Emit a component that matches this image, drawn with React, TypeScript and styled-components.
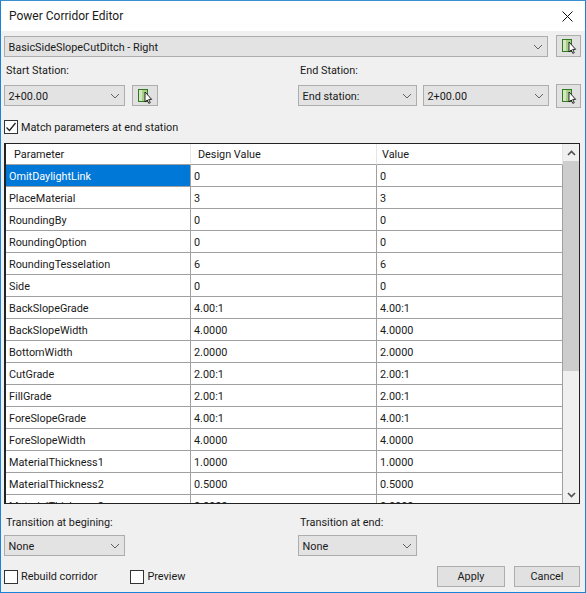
import React from "react";
import styled, { createGlobalStyle } from "styled-components";

const Global = createGlobalStyle`
  html, body { margin: 0; padding: 0; background: #f0f0f0; }
  * { box-sizing: border-box; }
`;

const Win = styled.div`
  width: 586px;
  height: 593px;
  display: flex;
  flex-direction: column;
  overflow: hidden;
  background: #f0f0f0;
  border: 1px solid #1883d7;
  border-top-color: #3a8fd0;
  font-family: Roboto, "Open Sans", sans-serif;
  font-size: 10.85px;
  color: #1a1a1a;
`;

const TitleBar = styled.div`
  height: 30px;
  flex: none;
  background: #fff;
  display: flex;
  align-items: center;
  justify-content: space-between;
  padding: 0 12px 0 8px;
  font-size: 12px;
`;

const Body = styled.div`
  flex: 1;
  display: flex;
  flex-direction: column;
  padding: 4px 4px 0 3px;
`;

const Row = styled.div<{ $mt?: number; $h?: number }>`
  display: flex;
  align-items: center;
  margin-top: ${(p) => p.$mt ?? 0}px;
  height: ${(p) => p.$h ?? 22}px;
`;

const Combo = styled.div<{ $w: number; $end?: boolean }>`
  width: ${(p) => p.$w}px;
  height: 21px;
  flex: none;
  align-self: ${(p) => (p.$end ? "flex-end" : "center")};
  border: 1px solid #adadad;
  background: #e3e3e3;
  display: flex;
  align-items: center;
  justify-content: space-between;
  padding: 1px 4px 0 3.5px;
  white-space: nowrap;
`;

const PickButton = styled.div<{ $w?: number; $h?: number }>`
  width: ${(p) => p.$w ?? 25}px;
  height: ${(p) => p.$h ?? 22}px;
  flex: none;
  border: 1px solid #adadad;
  background: #e1e1e1;
  display: flex;
  align-items: center;
  justify-content: center;
`;

const HalfLeft = styled.div`
  width: 294px;
  flex: none;
  display: flex;
  align-items: center;
`;

const Label = styled.div`
  padding: 1px 0 0 2px;
  white-space: nowrap;
`;

const Gap = styled.div<{ $w: number }>`
  width: ${(p) => p.$w}px;
  flex: none;
`;

const Check = styled.div`
  width: 14px;
  height: 14px;
  flex: none;
  border: 1px solid #333;
  background: #fff;
  display: flex;
  align-items: center;
  justify-content: center;
`;

const CheckLabel = styled.span`
  margin-left: 3px;
  white-space: nowrap;
`;

const Table = styled.div`
  margin-top: 9px;
  width: 576px;
  height: 361px;
  flex: none;
  border: 1px solid #222;
  border-width: 1px 1px 1px 2px;
  background: #fff;
  display: flex;
  overflow: hidden;
`;

const Grid = styled.div`
  width: 557px;
  flex: none;
  display: grid;
  grid-template-columns: 185px 186px 186px;
  grid-auto-rows: 22px;
`;

const HeadCell = styled.div<{ $pad: number }>`
  height: 21px;
  border-right: 1px solid #e6e6e6;
  border-bottom: 1px solid #a0a0a0;
  padding: 1px 0 0 ${(p) => p.$pad}px;
  display: flex;
  align-items: center;
`;

const Cell = styled.div<{ $sel?: boolean }>`
  margin-top: -1px;
  height: 22px;
  border-right: 1px solid #a0a0a0;
  border-bottom: 1px solid #a0a0a0;
  padding: 1px 0 0 3px;
  display: flex;
  align-items: center;
  white-space: nowrap;
  background: ${(p) => (p.$sel ? "#0078d7" : "#fff")};
  color: ${(p) => (p.$sel ? "#fff" : "#1a1a1a")};
`;

const Scrollbar = styled.div`
  flex: 1;
  background: #f0f0f0;
  display: flex;
  flex-direction: column;
`;

const ScrollArrow = styled.div`
  height: 17px;
  flex: none;
  display: flex;
  align-items: center;
  justify-content: center;
`;

const Thumb = styled.div`
  height: 210px;
  flex: none;
  background: #cdcdcd;
`;

const Track = styled.div`
  flex: 1;
`;

const Footer = styled.div`
  display: flex;
  align-items: center;
  justify-content: space-between;
  height: 21px;
  width: 576px;
  margin-top: 10px;
`;

const FooterChecks = styled.div`
  display: flex;
  align-items: center;
`;

const FooterButtons = styled.div`
  display: flex;
  gap: 9px;
`;

const Button = styled.div<{ $w: number }>`
  width: ${(p) => p.$w}px;
  height: 21px;
  border: 1px solid #adadad;
  background: #e1e1e1;
  display: flex;
  align-items: center;
  justify-content: center;
`;

const Chevron = () => (
  <svg width="10" height="6" viewBox="0 0 10 6">
    <path d="M1 1l4 4 4-4" fill="none" stroke="#606060" strokeWidth="1" />
  </svg>
);

const PickIcon = () => (
  <svg width="16" height="16" viewBox="0 0 16 16">
    <rect x="1.5" y="1.5" width="9" height="12" fill="#a8d08a" stroke="#2f7a1f" />
    <rect x="2" y="2" width="3" height="11" fill="#d3e8c0" />
    <path
      d="M8 4v10l2.2-2 1.6 3.4 1.5-.7-1.6-3.3h3z"
      fill="#fff"
      stroke="#111"
      strokeWidth="0.9"
    />
  </svg>
);

const Arrow = ({ up }: { up?: boolean }) => (
  <svg width="9" height="6" viewBox="0 0 9 6">
    <path
      d={up ? "M1 5l3.5-3.5L8 5" : "M1 1l3.5 3.5L8 1"}
      fill="none"
      stroke="#505050"
      strokeWidth="1.6"
    />
  </svg>
);

const rows: [string, string][] = [
  ["OmitDaylightLink", "0"],
  ["PlaceMaterial", "3"],
  ["RoundingBy", "0"],
  ["RoundingOption", "0"],
  ["RoundingTesselation", "6"],
  ["Side", "0"],
  ["BackSlopeGrade", "4.00:1"],
  ["BackSlopeWidth", "4.0000"],
  ["BottomWidth", "2.0000"],
  ["CutGrade", "2.00:1"],
  ["FillGrade", "2.00:1"],
  ["ForeSlopeGrade", "4.00:1"],
  ["ForeSlopeWidth", "4.0000"],
  ["MaterialThickness1", "1.0000"],
  ["MaterialThickness2", "0.5000"],
  ["MaterialThickness3", "0.0000"],
];

export default function App() {
  return (
    <Win>
      <Global />
      <TitleBar>
        <span>Power Corridor Editor</span>
        <svg width="11" height="11" viewBox="0 0 11 11">
          <path d="M.5.5l10 10M10.5.5l-10 10" stroke="#111" strokeWidth="1" />
        </svg>
      </TitleBar>
      <Body>
        <Row>
          <Combo $w={544} $end>
            <span>BasicSideSlopeCutDitch - Right</span>
            <Chevron />
          </Combo>
          <Gap $w={8} />
          <PickButton>
            <PickIcon />
          </PickButton>
        </Row>
        <Row $mt={4} $h={17}>
          <HalfLeft>
            <Label>Start Station:</Label>
          </HalfLeft>
          <Label>End Station:</Label>
        </Row>
        <Row $mt={6} $h={23}>
          <HalfLeft>
            <Combo $w={121}>
              <span>2+00.00</span>
              <Chevron />
            </Combo>
            <Gap $w={7} />
            <PickButton $w={26} $h={21}>
              <PickIcon />
            </PickButton>
          </HalfLeft>
          <Combo $w={119}>
            <span>End station:</span>
            <Chevron />
          </Combo>
          <Gap $w={6} />
          <Combo $w={126}>
            <span>2+00.00</span>
            <Chevron />
          </Combo>
          <Gap $w={7} />
          <PickButton $h={24}>
            <PickIcon />
          </PickButton>
        </Row>
        <Row $mt={13} $h={14}>
          <Check>
            <svg width="12" height="12" viewBox="0 0 12 12">
              <path d="M1.5 6.5l3 3 6-7.5" fill="none" stroke="#222" strokeWidth="1.3" />
            </svg>
          </Check>
          <CheckLabel>Match parameters at end station</CheckLabel>
        </Row>
        <Table>
          <Grid>
            <HeadCell $pad={8}>Parameter</HeadCell>
            <HeadCell $pad={7}>Design Value</HeadCell>
            <HeadCell $pad={5}>Value</HeadCell>
            {rows.map(([name, value], i) => (
              <React.Fragment key={name}>
                <Cell $sel={i === 0}>{name}</Cell>
                <Cell>{value}</Cell>
                <Cell>{value}</Cell>
              </React.Fragment>
            ))}
          </Grid>
          <Scrollbar>
            <ScrollArrow>
              <Arrow up />
            </ScrollArrow>
            <Thumb />
            <Track />
            <ScrollArrow>
              <Arrow />
            </ScrollArrow>
          </Scrollbar>
        </Table>
        <Row $mt={9} $h={17}>
          <HalfLeft>
            <Label>Transition at begining:</Label>
          </HalfLeft>
          <Label>Transition at end:</Label>
        </Row>
        <Row $mt={5} $h={21}>
          <HalfLeft>
            <Combo $w={121}>
              <span>None</span>
              <Chevron />
            </Combo>
          </HalfLeft>
          <Combo $w={119}>
            <span>None</span>
            <Chevron />
          </Combo>
        </Row>
        <Footer>
          <FooterChecks>
            <Check />
            <CheckLabel>Rebuild corridor</CheckLabel>
            <Gap $w={33} />
            <Check />
            <CheckLabel>Preview</CheckLabel>
          </FooterChecks>
          <FooterButtons>
            <Button $w={68}>Apply</Button>
            <Button $w={66}>Cancel</Button>
          </FooterButtons>
        </Footer>
      </Body>
    </Win>
  );
}
